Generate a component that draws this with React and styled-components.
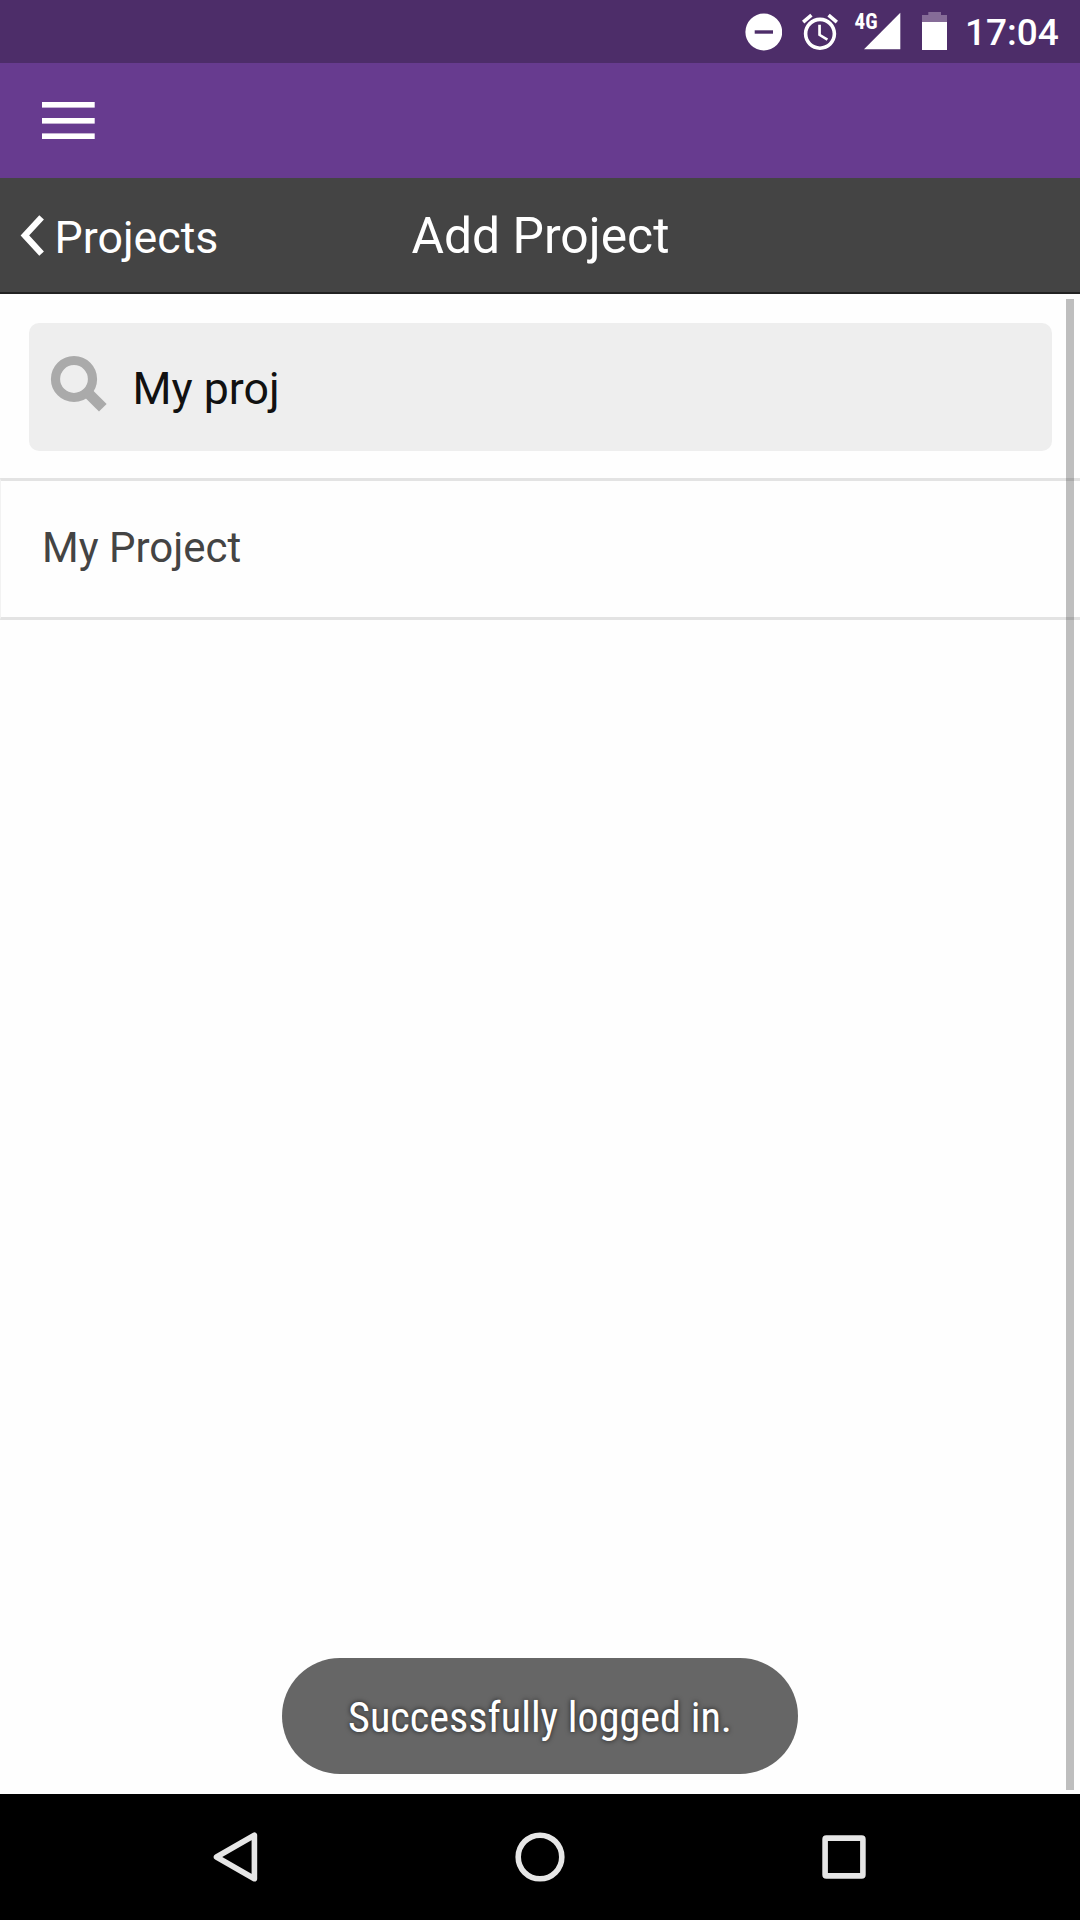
import React from "react";
import styled, { createGlobalStyle } from "styled-components";

const GlobalStyle = createGlobalStyle`
  * { box-sizing: border-box; }
  body { margin: 0; background: #fefefe; font-family: Roboto, "Liberation Sans", sans-serif; }
  svg { display: block; flex: none; }
`;

const Screen = styled.div`
  width: 1080px;
  height: 1920px;
  display: flex;
  flex-direction: column;
  overflow: hidden;
  background: #fefefe;
`;

const StatusBar = styled.div`
  height: 63px;
  display: flex;
  justify-content: flex-end;
  padding-right: 20px;
  background: #4d2d69;
  color: #fff;
`;

const StatusIcon = styled.svg`
  margin-right: ${(p) => p.$gap}px;
`;

const Clock = styled.span`
  width: 95px;
  font-size: 37px;
  font-weight: 500;
  line-height: 66px;
  white-space: nowrap;
`;

const NetworkLabel = styled.text`
  font-family: "Roboto Condensed", Roboto, sans-serif;
  font-size: 21.5px;
  font-weight: 700;
  fill: #fff;
`;

const AppBar = styled.header`
  height: 115px;
  display: flex;
  background: #673b8f;
`;

const IconButton = styled.button`
  border: 0;
  margin: 0;
  padding: 0;
  background: none;
`;

const TitleBar = styled.div`
  height: 116px;
  display: grid;
  grid-template-columns: 1fr auto 1fr;
  background: #444;
  border-bottom: 2px solid #222;
  color: #fff;
`;

const BackLink = styled.div`
  display: flex;
  font-size: 44.7px;
  line-height: 120px;
`;

const Title = styled.h1`
  margin: 0;
  padding-left: 1px;
  font-size: 49.8px;
  font-weight: 400;
  line-height: 116px;
`;

const Content = styled.main`
  flex: 1;
  position: relative;
  padding-top: 29px;
`;

const SearchField = styled.div`
  display: flex;
  height: 128px;
  margin: 0 28px 27px 29px;
  border-radius: 10px;
  background: #eee;
  color: #111;
  font-size: 44.7px;
  line-height: 133px;
`;

const ListItem = styled.div`
  height: 142px;
  padding-left: 41px;
  border: solid #e3e3e3;
  border-width: 3px 0 3px 1px;
  border-left-color: #f2f2f2;
  color: #444;
  font-size: 42px;
  line-height: 134px;
`;

const ScrollThumb = styled.div`
  position: absolute;
  top: 5px;
  right: 6px;
  width: 8px;
  height: 1491px;
  background: rgba(0, 0, 0, 0.25);
`;

const Toast = styled.div`
  position: absolute;
  left: 282px;
  bottom: 20px;
  width: 516px;
  height: 116px;
  border-radius: 58px;
  display: flex;
  justify-content: center;
  background: #666;
  color: #fff;
`;

const ToastText = styled.span`
  font-family: "Roboto Condensed", Roboto, sans-serif;
  font-size: 42.2px;
  line-height: 119px;
  white-space: nowrap;
  text-shadow: 0 0 5px rgba(0, 0, 0, 0.7);
`;

const NavBar = styled.nav`
  height: 126px;
  display: flex;
  justify-content: center;
  gap: 208px;
  padding-top: 32px;
  background: #000;
`;

const NavIcon = styled.svg.attrs({ width: 96, height: 62, viewBox: "0 0 96 62" })`
  fill: none;
  stroke: #e6e6e6;
  stroke-width: 5.6;
  stroke-linejoin: round;
`;

export default function App() {
  return (
    <>
      <GlobalStyle />
      <Screen>
        <StatusBar>
          <StatusIcon $gap={16} width="37" height="63" viewBox="0 0 37 63">
            <circle cx="18.8" cy="32" r="18.4" fill="#fff" />
            <rect x="9.7" y="30.3" width="18.3" height="3.4" fill="#4d2d69" />
          </StatusIcon>
          <StatusIcon $gap={13} width="43" height="63" viewBox="0 0 43 63">
            <path
              transform="translate(.4 10.4) scale(1.8)"
              fill="#fff"
              d="M22 5.72l-4.6-3.86-1.29 1.53 4.6 3.86L22 5.72zM7.88 3.39L6.6 1.86 2 5.71l1.29 1.53 4.59-3.85zM12.5 8H11v6l4.75 2.85.75-1.23-4-2.37V8zM12 4c-4.97 0-9 4.03-9 9s4.02 9 9 9c4.97 0 9-4.03 9-9s-4.03-9-9-9zm0 16c-3.87 0-7-3.13-7-7s3.13-7 7-7 7 3.13 7 7-3.13 7-7 7z"
            />
          </StatusIcon>
          <StatusIcon $gap={21} width="47" height="63" viewBox="0 0 47 63">
            <path d="M10 49.3H46.3V12.7Z" fill="#fff" />
            <NetworkLabel x=".6" y="29.4" textLength="23" lengthAdjust="spacingAndGlyphs">4G</NetworkLabel>
          </StatusIcon>
          <StatusIcon $gap={18} width="25" height="63" viewBox="0 0 25 63">
            <path d="M0 22V15H6.3V12H19V15H25V22Z" fill="#866c98" />
            <rect y="22" width="25" height="28" fill="#fff" />
          </StatusIcon>
          <Clock>17:04</Clock>
        </StatusBar>
        <AppBar>
          <IconButton aria-label="Menu">
            <svg width="136" height="115" viewBox="0 0 136 115" fill="#fff">
              <rect x="42" y="39" width="52.7" height="5.6" />
              <rect x="42" y="55" width="52.7" height="5.6" />
              <rect x="42" y="70.4" width="52.7" height="5.6" />
            </svg>
          </IconButton>
        </AppBar>
        <TitleBar>
          <BackLink>
            <svg width="54.5" height="114" viewBox="0 0 54.5 114">
              <path d="M41.6 39.3L24.9 57.4L41.6 75.7" fill="none" stroke="#fff" strokeWidth="6.3" />
            </svg>
            Projects
          </BackLink>
          <Title>Add Project</Title>
        </TitleBar>
        <Content>
          <SearchField>
            <svg width="103.5" height="128" viewBox="0 0 103.5 128" fill="none" stroke="#aaa">
              <circle cx="45" cy="56" r="18.5" strokeWidth="9.2" />
              <path d="M58 69L73.8 84.8" strokeWidth="10.8" />
            </svg>
            My proj
          </SearchField>
          <ListItem>My Project</ListItem>
          <ScrollThumb />
          <Toast>
            <ToastText>Successfully logged in.</ToastText>
          </Toast>
        </Content>
        <NavBar>
          <NavIcon>
            <path d="M28.5 31L66.4 9.2V52.8Z" />
          </NavIcon>
          <NavIcon>
            <circle cx="48" cy="31" r="21.8" />
          </NavIcon>
          <NavIcon>
            <rect x="29.1" y="12.1" width="37.8" height="37.8" rx="1.2" />
          </NavIcon>
        </NavBar>
      </Screen>
    </>
  );
}
